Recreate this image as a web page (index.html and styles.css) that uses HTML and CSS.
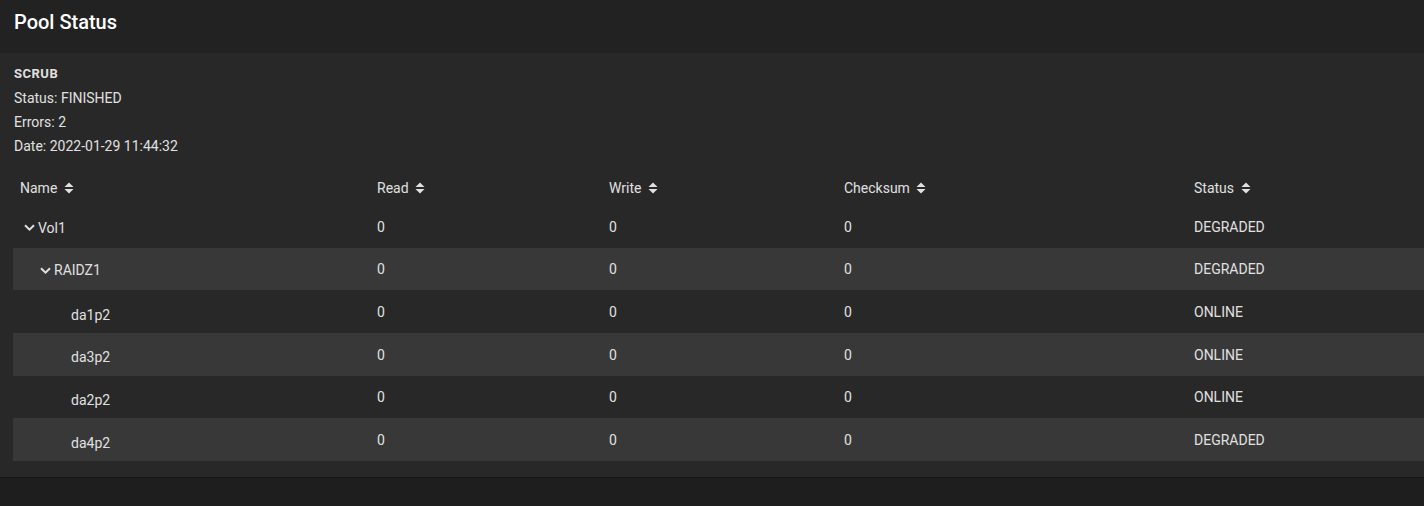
FILE: index.html
```html
<!DOCTYPE html>
<html lang="en">
<head>
  <meta charset="UTF-8">
  <meta name="viewport" content="width=device-width, initial-scale=1.0">
  <title>Pool Status</title>
  <link rel="stylesheet" href="styles.css">
</head>
<body>

<div class="card">
  <div class="card-header">
    <h1 class="card-title">Pool Status</h1>
  </div>
  <div class="card-body">
    <div class="scrub">
      <div class="scrub-title">SCRUB</div>
      <div>Status: FINISHED</div>
      <div>Errors: 2</div>
      <div>Date: 2022-01-29 11:44:32</div>
    </div>

    <table class="pool-table">
      <colgroup>
        <col class="col-name">
        <col class="col-read">
        <col class="col-write">
        <col class="col-checksum">
        <col>
      </colgroup>
      <thead>
        <tr>
          <th>Name <svg class="sort" viewBox="0 0 10 12"><path d="M0.5 5 L5 0.5 L9.5 5 Z M0.5 7 L9.5 7 L5 11.5 Z"/></svg></th>
          <th>Read <svg class="sort" viewBox="0 0 10 12"><path d="M0.5 5 L5 0.5 L9.5 5 Z M0.5 7 L9.5 7 L5 11.5 Z"/></svg></th>
          <th>Write <svg class="sort" viewBox="0 0 10 12"><path d="M0.5 5 L5 0.5 L9.5 5 Z M0.5 7 L9.5 7 L5 11.5 Z"/></svg></th>
          <th>Checksum <svg class="sort" viewBox="0 0 10 12"><path d="M0.5 5 L5 0.5 L9.5 5 Z M0.5 7 L9.5 7 L5 11.5 Z"/></svg></th>
          <th>Status <svg class="sort" viewBox="0 0 10 12"><path d="M0.5 5 L5 0.5 L9.5 5 Z M0.5 7 L9.5 7 L5 11.5 Z"/></svg></th>
        </tr>
      </thead>
      <tbody>
        <tr>
          <td><span class="node level-0"><svg class="toggle" viewBox="0 0 11 7"><path d="M1 1.2 L5.5 5.6 L10 1.2"/></svg>Vol1</span></td>
          <td>0</td><td>0</td><td>0</td><td>DEGRADED</td>
        </tr>
        <tr>
          <td><span class="node level-1"><svg class="toggle" viewBox="0 0 11 7"><path d="M1 1.2 L5.5 5.6 L10 1.2"/></svg>RAIDZ1</span></td>
          <td>0</td><td>0</td><td>0</td><td>DEGRADED</td>
        </tr>
        <tr>
          <td><span class="node level-2"><span class="toggle"></span>da1p2</span></td>
          <td>0</td><td>0</td><td>0</td><td>ONLINE</td>
        </tr>
        <tr>
          <td><span class="node level-2"><span class="toggle"></span>da3p2</span></td>
          <td>0</td><td>0</td><td>0</td><td>ONLINE</td>
        </tr>
        <tr>
          <td><span class="node level-2"><span class="toggle"></span>da2p2</span></td>
          <td>0</td><td>0</td><td>0</td><td>ONLINE</td>
        </tr>
        <tr>
          <td><span class="node level-2"><span class="toggle"></span>da4p2</span></td>
          <td>0</td><td>0</td><td>0</td><td>DEGRADED</td>
        </tr>
      </tbody>
    </table>
  </div>
</div>

</body>
</html>
```

FILE: styles.css
```css
body {
  margin: 0;
  background-color: #1e1e1e;
  color: #e0e0e0;
  font-family: Roboto, "Noto Sans", Arial, sans-serif;
  font-size: 14px;
}

.card {
  background-color: #282828;
  border-bottom: 1px solid #161616;
}

.card-header {
  height: 53px;
  background-color: #222222;
  display: flex;
  align-items: center;
  padding: 0 14px;
  box-sizing: border-box;
}

.card-title {
  margin: 0 0 10px;
  font-size: 20px;
  font-weight: 500;
  color: #ffffff;
}

.card-body {
  padding: 9px 0 16px 13px;
}

.scrub {
  padding-left: 1px;
  line-height: 24px;
}

.scrub-title {
  font-size: 13px;
  font-weight: 700;
  letter-spacing: 0.5px;
}

.pool-table {
  width: 100%;
  margin-top: 10px;
  border-collapse: collapse;
  table-layout: fixed;
}

.col-name {
  width: 357px;
}

.col-read {
  width: 232px;
}

.col-write {
  width: 235px;
}

.col-checksum {
  width: 350px;
}

.pool-table th {
  height: 34px;
  padding: 3px 7px 0;
  text-align: left;
  font-weight: 400;
  white-space: nowrap;
}

.pool-table td {
  height: 41.67px;
  padding: 1px 7px 0;
  white-space: nowrap;
}

.pool-table tbody tr:nth-child(even) {
  background-color: #383838;
}

.sort {
  width: 10px;
  height: 12px;
  margin-left: 3px;
  vertical-align: -1px;
  fill: #e0e0e0;
}

.node {
  display: inline-flex;
  align-items: center;
}

.toggle {
  width: 18px;
  flex: none;
}

svg.toggle {
  width: 11px;
  height: 7px;
  padding: 0 3px 0 4px;
  fill: none;
  stroke: #e0e0e0;
  stroke-width: 2;
}

.level-1 {
  padding-left: 16px;
}

.level-2 {
  padding-left: 33px;
}
```
